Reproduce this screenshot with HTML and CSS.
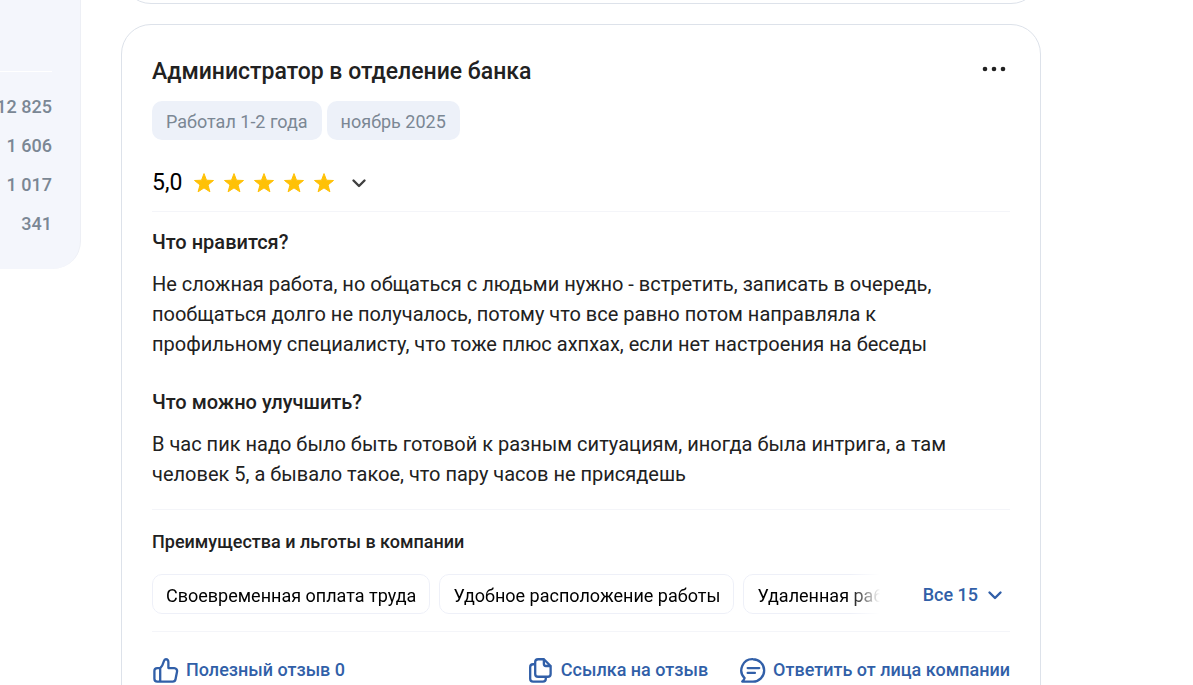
FILE: index.html
```html
<!DOCTYPE html>
<html lang="ru">
<head>
<meta charset="utf-8">
<meta name="viewport" content="width=device-width, initial-scale=1">
<title>Отзывы сотрудников</title>
<link rel="stylesheet" href="styles.css">
</head>
<body>
<svg class="sprite" aria-hidden="true">
  <symbol id="star" viewBox="0 0 20 20"><path d="M10 .6l2.500 6.600 7 .3-5.500 4.400 1.900 6.900L10 14.900l-5.900 3.900L6 11.900.500 7.500l7-.3z" fill="currentColor" stroke="currentColor" stroke-width="1" stroke-linejoin="round"/></symbol>
  <symbol id="chevron" viewBox="0 0 16 16"><path d="M2.500 5.500L8 11l5.500-5.500" fill="none" stroke="currentColor" stroke-width="2.400" stroke-linecap="round" stroke-linejoin="round"/></symbol>
</svg>
<div class="page">
  <aside class="sidebar">
    <ul class="counts">
      <li>12 825</li>
      <li>1 606</li>
      <li>1 017</li>
      <li>341</li>
    </ul>
  </aside>
  <main class="feed">
    <article class="card card-previous"></article>
    <article class="card review">
      <header class="review-head">
        <h2 class="title">Администратор в отделение банка</h2>
        <button class="more" type="button" aria-label="Ещё">
          <svg width="24" height="6" viewBox="0 0 24 6" fill="currentColor"><circle cx="3" cy="3" r="2.300"/><circle cx="12" cy="3" r="2.300"/><circle cx="21" cy="3" r="2.300"/></svg>
        </button>
      </header>
      <div class="tags">
        <span class="tag">Работал 1-2 года</span>
        <span class="tag">ноябрь 2025</span>
      </div>
      <div class="rating">
        <span class="score">5,0</span>
        <span class="stars">
          <svg class="star"><use href="#star"/></svg>
          <svg class="star"><use href="#star"/></svg>
          <svg class="star"><use href="#star"/></svg>
          <svg class="star"><use href="#star"/></svg>
          <svg class="star"><use href="#star"/></svg>
        </span>
        <button class="expand" type="button" aria-label="Подробнее об оценке"><svg class="chevron"><use href="#chevron"/></svg></button>
      </div>
      <section class="answers">
        <h3 class="question">Что нравится?</h3>
        <p class="answer">Не сложная работа, но общаться с людьми нужно - встретить, записать в очередь, пообщаться долго не получалось, потому что все равно потом направляла к профильному специалисту, что тоже плюс ахпхах, если нет настроения на беседы</p>
        <h3 class="question">Что можно улучшить?</h3>
        <p class="answer">В час пик надо было быть готовой к разным ситуациям, иногда была интрига, а там человек 5, а бывало такое, что пару часов не присядешь</p>
      </section>
      <section class="benefits">
        <h4 class="benefits-title">Преимущества и льготы в компании</h4>
        <div class="benefits-row">
          <div class="benefits-list">
            <span class="benefit">Своевременная оплата труда</span>
            <span class="benefit">Удобное расположение работы</span>
            <span class="benefit">Удаленная работа</span>
          </div>
          <button class="link show-all" type="button">Все 15 <svg class="chevron"><use href="#chevron"/></svg></button>
        </div>
      </section>
      <footer class="actions">
        <button class="link action useful" type="button">
          <svg class="icon" viewBox="0 0 28 28"><path d="M8.500 11.500v14M8.500 11.500H5.500a3 3 0 0 0-3 3v8a3 3 0 0 0 3 3H21.500a3 3 0 0 0 2.900-2.400l1.600-8a3 3 0 0 0-2.900-3.600H17V5.500C17 3.500 16 2.300 14.400 2.300c-1.200 0-1.700.7-2 1.800C11.500 7.500 10.800 9.500 8.500 11.500"/></svg>
          Полезный отзыв 0
        </button>
        <button class="link action" type="button">
          <svg class="icon" viewBox="0 0 28 28"><path d="M11.500 2.300H17.500l7 7V17.500a3 3 0 0 1-3 3H11.500a3 3 0 0 1-3-3V5.300a3 3 0 0 1 3-3zM17.500 2.300V7.300a2 2 0 0 0 2 2h5M8.500 7.500H6.300a3 3 0 0 0-3 3V22.500a3 3 0 0 0 3 3H16.500a3 3 0 0 0 3-3V20.500"/></svg>
          Ссылка на отзыв
        </button>
        <button class="link action" type="button">
          <svg class="icon" viewBox="0 0 28 28"><path d="M14.500 2.300a11.500 11.500 0 1 1 0 23.200H3.300c1.300-1.200 2.200-2.200 2.500-3.600A11.500 11.500 0 0 1 14.500 2.300zM9 11.500h12M9 16.500h7.500"/></svg>
          Ответить от лица компании
        </button>
      </footer>
    </article>
  </main>
</div>
</body>
</html>
```
FILE: styles.css
```css
* {
  box-sizing: border-box;
}

body {
  margin: 0;
  background: #fff;
  color: #212121;
  font-family: Roboto, "Noto Sans", sans-serif;
  font-size: 20px;
  line-height: 30px;
}

h2, h3, h4, p, ul {
  margin: 0;
  padding: 0;
}

button {
  padding: 0;
  border: 0;
  background: none;
  color: inherit;
  font: inherit;
  cursor: pointer;
}

svg {
  display: block;
  flex: none;
}

.sprite {
  position: absolute;
  width: 0;
  height: 0;
}

.page {
  display: grid;
  grid-template-columns: 81px minmax(0, 920px);
  align-items: start;
  column-gap: 40px;
  height: 100vh;
  overflow: hidden;
}

.sidebar {
  overflow: hidden;
  padding: 71px 28px 30px 0;
  border-right: 1px solid #edeff5;
  border-radius: 0 0 28px 0;
  background: #f4f6fc;
}

.counts {
  display: grid;
  grid-template-columns: minmax(0, 1fr);
  gap: 9px;
  padding-top: 20px;
  border-top: 1px solid #fff;
  color: #7b8794;
  font-size: 18px;
  font-weight: 500;
  list-style: none;
}

.counts li {
  display: flex;
  justify-content: flex-end;
  white-space: nowrap;
}

.card {
  border: 1px solid #dde2ea;
  border-radius: 30px;
  background: #fff;
}

.card-previous {
  height: 80px;
  margin: -76px 0 20px;
}

.review {
  padding: 32px 30px 30px;
}

.review-head {
  display: flex;
  justify-content: space-between;
  align-items: center;
}

.title {
  font-size: 23px;
  font-weight: 500;
}

.more {
  padding: 8px 4px 14px;
}

.tags {
  display: flex;
  gap: 5px;
  margin-top: 14px;
}

.tag {
  padding: 6px 14px 3px;
  border-radius: 10px;
  background: #edf1f9;
  color: #7b8794;
  font-size: 18px;
}

.rating {
  display: flex;
  align-items: center;
  margin-top: 28px;
  padding-bottom: 13px;
  border-bottom: 1px solid #f4f5f9;
}

.score {
  font-size: 23px;
  color: #000;
}

.stars {
  display: flex;
  gap: 10px;
  margin-left: 12px;
  color: #ffc107;
}

.star {
  width: 20px;
  height: 20px;
}

.expand {
  margin-left: 17px;
  color: #404040;
}

.chevron {
  width: 16px;
  height: 16px;
}

.answers {
  padding: 15px 0 20px;
  border-bottom: 1px solid #f4f5f9;
}

.question {
  font-size: 20px;
  font-weight: 500;
}

.answer {
  margin-top: 12px;
}

.answer + .question {
  margin-top: 28px;
}

.benefits {
  padding: 17px 0;
  border-bottom: 1px solid #f4f5f9;
}

.benefits-title {
  font-size: 18px;
  font-weight: 500;
}

.benefits-row {
  display: flex;
  align-items: center;
  justify-content: space-between;
  gap: 43px;
  margin-top: 17px;
}

.benefits-list {
  display: flex;
  flex: 1;
  gap: 9px;
  min-width: 0;
  overflow: hidden;
  mask-image: linear-gradient(to left, transparent, #000 30px);
}

.benefit {
  flex: none;
  padding: 6px 13px 2px;
  border: 1px solid #eef0f8;
  border-radius: 10px;
  color: #000;
  font-size: 18px;
  white-space: nowrap;
}

.link {
  display: flex;
  align-items: center;
  color: #315fa8;
  font-size: 18px;
  font-weight: 500;
  white-space: nowrap;
}

.show-all {
  gap: 9px;
  padding: 1px 7px 0 0;
}

.actions {
  display: flex;
  gap: 31px;
  padding-top: 23px;
}

.action {
  gap: 7px;
}

.useful {
  margin-right: auto;
}

.icon {
  width: 27px;
  height: 27px;
  fill: none;
  stroke: currentColor;
  stroke-width: 2.400;
  stroke-linecap: round;
  stroke-linejoin: round;
}
```
